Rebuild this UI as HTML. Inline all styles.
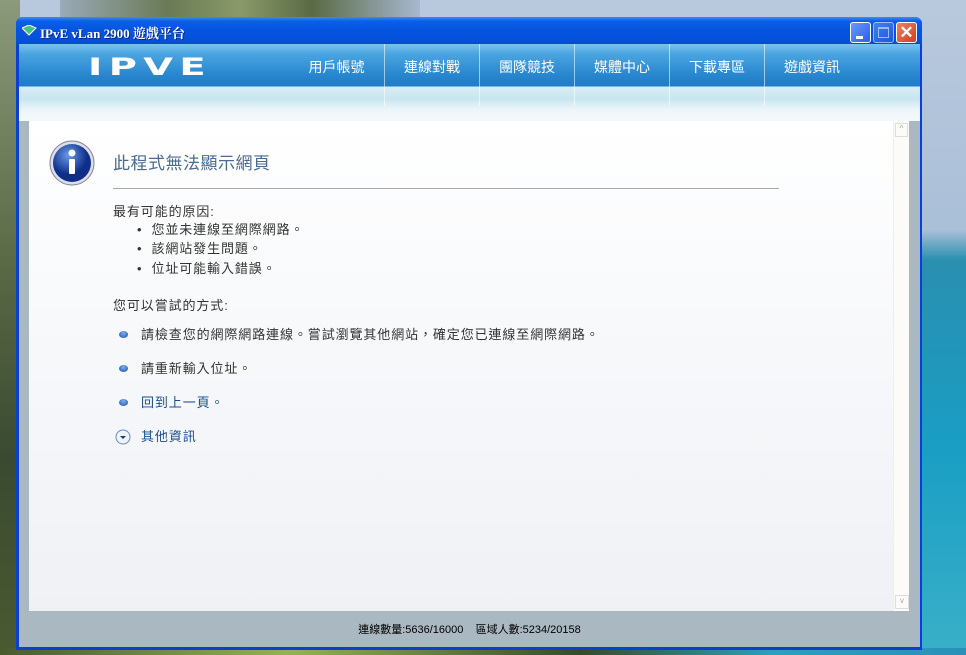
<!DOCTYPE html>
<html><head><meta charset="utf-8">
<style>
*{margin:0;padding:0;box-sizing:border-box}
body{width:966px;height:655px;overflow:hidden;position:relative;font-family:"Liberation Sans","Noto Sans CJK TC",sans-serif;
background:linear-gradient(180deg,#b9c9dd 0,#aabfd8 230px,#2a8fb0 260px,#1a9ec4 450px,#3ab0c8 655px);}
.palm{position:absolute;left:0;top:0;width:20px;height:655px;background:linear-gradient(180deg,#8a9a7a,#5a6a45 40%,#3a4a30 70%,#4a5a30);}
.palm2{position:absolute;left:60px;top:0;width:360px;height:18px;background:linear-gradient(90deg,#9aaab8,#6a7a55 30%,#8a9a6a,#5a6a45 70%,#a8b8d0);}
.ground{position:absolute;left:0;top:648px;width:966px;height:7px;background:linear-gradient(90deg,#4a5a30,#9ab050 30%,#3a4a28 60%,#2aa0c0 80%,#2a90b8);}
.win{position:absolute;left:16px;top:17px;width:906px;height:633px;background:#0a3fd0;border-radius:7px 7px 0 0;}
.inner{position:absolute;left:3px;top:27px;width:901px;height:603px;background:#aab8c1}
.title{position:absolute;left:0;top:0;width:906px;height:28px;border-radius:7px 7px 0 0;background:linear-gradient(180deg,#3a8cf8 0,#0f5ee8 4px,#0554e0 14px,#0550d8 24px,#0a46c8 28px);}
.title span{position:absolute;left:24px;top:6px;color:#fff;font:bold 13px "Liberation Serif","Noto Serif CJK SC",serif;text-shadow:1px 1px 0 #0a2a80}
.tb{position:absolute;top:5px;width:21px;height:21px;border:1px solid #fff;border-radius:3px;background:linear-gradient(135deg,#6a9af8,#2a5ee8)}
.head{position:absolute;left:3px;top:27px;width:901px;height:77px;background:linear-gradient(180deg,#7ac4ee 0,#4aa4e0 10px,#2a88d0 30px,#1e7cc8 42px,#d8eef4 43px,#c8e6f0 55px,#eef6fa 66px,#f4f8fb 77px)}
.nav{position:absolute;top:0;height:62px;width:95px;color:#fff;font-size:14px;text-align:center;padding-top:13px;border-left:1px solid rgba(255,255,255,.55)}
.logo{position:absolute;left:69px;top:9px;color:#fff;font:bold 24px "DejaVu Sans",sans-serif;letter-spacing:4px;transform:scaleX(1.6);transform-origin:left top}
.content{position:absolute;left:13px;top:104px;width:864px;height:490px;background:linear-gradient(180deg,#fff 0,#f8f9fb 200px,#eff1f5 490px)}
.sb{position:absolute;left:877px;top:104px;width:16px;height:490px;background:#fbfbf8;border-left:1px solid #eee}
.status{position:absolute;left:3px;top:594px;width:901px;height:36px;font-size:11px;text-align:center;padding-top:10px;color:#000}
.t{position:absolute;font-size:13px;color:#333;letter-spacing:.9px;white-space:nowrap}
.b{position:absolute;width:9px;height:7px;border-radius:50%;background:radial-gradient(circle at 50% 30%,#7ab0f0,#1e4ea8)}
</style></head><body>
<div class="palm"></div><div class="palm2"></div><div class="ground"></div>
<div class="win">
 <div class="inner"></div>
 <div class="title"><svg style="position:absolute;left:6px;top:8px" width="15" height="11"><path d="M0 3 L7 0 L14 3 L7 10Z" fill="#4ac080" stroke="#fff" stroke-width="1"/></svg><span>IPvE vLan 2900 遊戲平台</span>
  <div class="tb" style="left:834px"><div style="position:absolute;left:5px;top:13px;width:7px;height:3px;background:#fff"></div></div>
  <div class="tb" style="left:857px;opacity:.6"><div style="position:absolute;left:4px;top:4px;width:11px;height:11px;border:1px solid #fff;border-top-width:2px"></div></div>
  <div class="tb" style="left:880px;background:linear-gradient(135deg,#f08060,#d04020);color:#fff;font:bold 17px sans-serif;text-align:center;line-height:19px">✕</div>
 </div>
 <div class="head">
  <div class="logo">IPVE</div>
  <div class="nav" style="left:270px;border-left:none">用戶帳號</div>
  <div class="nav" style="left:365px">連線對戰</div>
  <div class="nav" style="left:460px">團隊競技</div>
  <div class="nav" style="left:555px">媒體中心</div>
  <div class="nav" style="left:650px">下載專區</div>
  <div class="nav" style="left:745px">遊戲資訊</div>
 </div>
 <div class="content">
  <svg style="position:absolute;left:20px;top:19px" width="46" height="46"><defs><radialGradient id="g" cx="40%" cy="30%"><stop offset="0" stop-color="#6a9ae8"/><stop offset="1" stop-color="#0e2e88"/></radialGradient></defs><circle cx="23" cy="23" r="22" fill="#dde" stroke="#889" /><circle cx="23" cy="23" r="19" fill="url(#g)"/><circle cx="23" cy="13" r="3.5" fill="#fff"/><rect x="20" y="19" width="6" height="15" rx="1" fill="#fff"/></svg>
  <div class="t" style="left:84px;top:28px;font-size:17px;color:#4a6a90;letter-spacing:.5px">此程式無法顯示網頁</div>
  <div style="position:absolute;left:84px;top:67px;width:666px;height:1px;background:#aaa"></div>
  <div class="t" style="left:84px;top:80px">最有可能的原因:</div>
  <div class="t" style="left:108px;top:98px">•&nbsp; 您並未連線至網際網路。</div>
  <div class="t" style="left:108px;top:117px">•&nbsp; 該網站發生問題。</div>
  <div class="t" style="left:108px;top:137px">•&nbsp; 位址可能輸入錯誤。</div>
  <div class="t" style="left:84px;top:174px">您可以嘗試的方式:</div>
  <div class="b" style="left:90px;top:210px"></div><div class="t" style="left:112px;top:203px">請檢查您的網際網路連線。嘗試瀏覽其他網站，確定您已連線至網際網路。</div>
  <div class="b" style="left:90px;top:244px"></div><div class="t" style="left:112px;top:237px">請重新輸入位址。</div>
  <div class="b" style="left:90px;top:278px"></div><div class="t" style="left:112px;top:271px;color:#1a4e90">回到上一頁。</div>
  <svg style="position:absolute;left:86px;top:308px" width="16" height="16"><circle cx="8" cy="8" r="7" fill="#eef4fb" stroke="#6a8ab8"/><path d="M5 7 L8 10 L11 7Z" fill="#1a3a78"/></svg>
  <div class="t" style="left:112px;top:305px;color:#1a4e90">其他資訊</div>
 </div>
 <div class="sb"><div style="margin:2px 1px;height:14px;border:1px solid #ddd;font-size:8px;color:#aaa;text-align:center">^</div><div style="position:absolute;bottom:2px;left:1px;width:14px;height:14px;border:1px solid #ddd;font-size:8px;color:#aaa;text-align:center">v</div></div>
 <div class="status">連線數量:5636/16000&nbsp;&nbsp;&nbsp; 區域人數:5234/20158</div>
</div>
</body></html>
